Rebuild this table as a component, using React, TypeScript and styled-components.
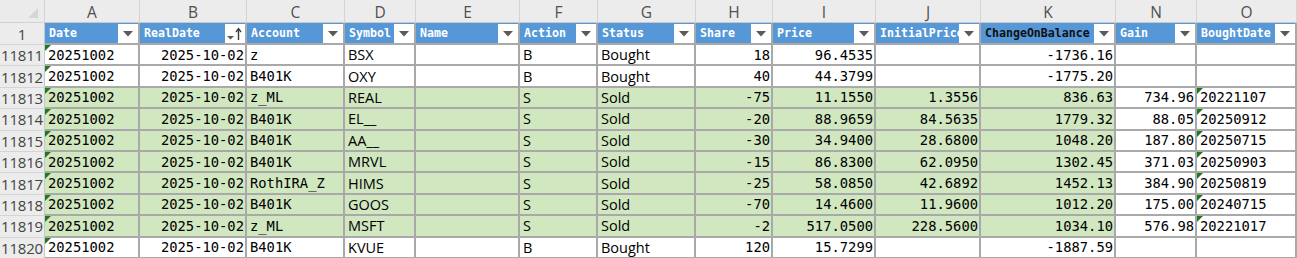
import React from "react";
import styled, { createGlobalStyle, css } from "styled-components";

const GlobalStyle = createGlobalStyle`
  html, body { margin: 0; padding: 0; background: #ffffff; overflow: hidden; }
  * { box-sizing: border-box; }
`;

const COLS = [45, 95, 107, 98, 71, 104, 78, 98, 77, 103, 105, 135, 81, 100];

const Sheet = styled.div`
  display: grid;
  grid-template-columns: ${COLS.map((c) => `${c}px`).join(" ")};
  grid-template-rows: 23px 22px repeat(10, 21.4px);
  width: 1297px;
`;

const Corner = styled.div`
  position: relative;
  background: #ebebeb;
  border-right: 1px solid #d2d2d2;
  border-bottom: 1px solid #d2d2d2;
`;

const CornerMark = styled.svg`
  position: absolute;
  right: 6px;
  bottom: 4px;
`;

const ColLetter = styled.div`
  background: #ececec;
  border-right: 1px solid #d4d4d4;
  border-bottom: 1px solid #c8c8c8;
  display: flex;
  align-items: center;
  justify-content: center;
  font-family: "Open Sans", "Noto Sans", sans-serif;
  font-size: 15.5px;
  color: #505050;
  padding-top: 1px;
`;

const RowNum = styled.div`
  background: #ececec;
  border-right: 1px solid #c8c8c8;
  border-bottom: 1px solid #d4d4d4;
  display: flex;
  align-items: center;
  justify-content: center;
  font-family: "Open Sans", "Noto Sans", sans-serif;
  font-size: 15px;
  letter-spacing: -0.2px;
  color: #444444;
  overflow: hidden;
`;

const HeaderCell = styled.div<{ $dark?: boolean }>`
  position: relative;
  background: #5697d8;
  border-right: 2px solid #a9a9a9;
  border-bottom: 2px solid #a9a9a9;
  display: flex;
  align-items: center;
  padding: 0 3px 0 4px;
  overflow: hidden;
  white-space: nowrap;
  font-family: "DejaVu Sans Mono", "Liberation Mono", monospace;
  font-weight: bold;
  font-size: 11.6px;
  color: ${(p) => (p.$dark ? "#101010" : "#ffffff")};
`;

const FilterButton = styled.div`
  position: absolute;
  right: 0;
  top: 1px;
  bottom: 0;
  width: 20px;
  background: #ffffff;
  display: flex;
  align-items: center;
  justify-content: center;
`;

const DataCell = styled.div<{
  $align?: "left" | "right";
  $green?: boolean;
  $sans?: boolean;
}>`
  position: relative;
  background: ${(p) => (p.$green ? "#d1e7c0" : "#ffffff")};
  border-right: 2px solid #a9a9a9;
  border-bottom: 2px solid #a9a9a9;
  display: flex;
  align-items: center;
  justify-content: ${(p) => (p.$align === "right" ? "flex-end" : "flex-start")};
  padding: 0 1px 0 3px;
  overflow: hidden;
  white-space: nowrap;
  color: #000000;
  ${(p) =>
    p.$sans
      ? css`
          font-family: "Open Sans", "Noto Sans", sans-serif;
          font-size: 14.5px;
        `
      : css`
          font-family: "DejaVu Sans Mono", "Liberation Mono", monospace;
          font-size: 13.8px;
        `}
`;

const Flag = styled.span`
  position: absolute;
  left: 0;
  top: 0;
  width: 0;
  height: 0;
  border-top: 6px solid #1f7a1f;
  border-right: 6px solid transparent;
`;

const DownTriangle = () => (
  <svg width="10" height="6" viewBox="0 0 10 6">
    <path d="M0 0 H10 L5 5.5 Z" fill="#5a5a5a" />
  </svg>
);

const SortIcon = () => (
  <svg width="18" height="16" viewBox="0 0 18 16">
    <path d="M1 10 H8 L4.5 13.5 Z" fill="#5a5a5a" />
    <path d="M12.5 14 V3" stroke="#3a3a3a" strokeWidth="1.4" />
    <path d="M10 6 L12.5 2.5 L15 6" stroke="#3a3a3a" strokeWidth="1.3" fill="none" />
  </svg>
);

type ColDef = {
  letter: string;
  title: string;
  align: "left" | "right";
  sans?: boolean;
  greenable: boolean;
  dark?: boolean;
  sort?: boolean;
  flag?: boolean;
};

const columns: ColDef[] = [
  { letter: "A", title: "Date", align: "left", greenable: true, flag: true },
  { letter: "B", title: "RealDate", align: "right", greenable: true, sort: true },
  { letter: "C", title: "Account", align: "left", greenable: true },
  { letter: "D", title: "Symbol", align: "left", sans: true, greenable: true },
  { letter: "E", title: "Name", align: "left", greenable: true },
  { letter: "F", title: "Action", align: "left", sans: true, greenable: true },
  { letter: "G", title: "Status", align: "left", sans: true, greenable: true },
  { letter: "H", title: "Share", align: "right", greenable: true },
  { letter: "I", title: "Price", align: "right", greenable: true },
  { letter: "J", title: "InitialPrice", align: "right", greenable: true },
  { letter: "K", title: "ChangeOnBalance", align: "right", greenable: true, dark: true },
  { letter: "N", title: "Gain", align: "right", greenable: false },
  { letter: "O", title: "BoughtDate", align: "left", greenable: false, flag: true },
];

type Row = { n: number; green: boolean; cells: string[] };

const rows: Row[] = [
  { n: 11811, green: false, cells: ["20251002", "2025-10-02", "z", "BSX", "", "B", "Bought", "18", "96.4535", "", "-1736.16", "", ""] },
  { n: 11812, green: false, cells: ["20251002", "2025-10-02", "B401K", "OXY", "", "B", "Bought", "40", "44.3799", "", "-1775.20", "", ""] },
  { n: 11813, green: true, cells: ["20251002", "2025-10-02", "z_ML", "REAL", "", "S", "Sold", "-75", "11.1550", "1.3556", "836.63", "734.96", "20221107"] },
  { n: 11814, green: true, cells: ["20251002", "2025-10-02", "B401K", "EL__", "", "S", "Sold", "-20", "88.9659", "84.5635", "1779.32", "88.05", "20250912"] },
  { n: 11815, green: true, cells: ["20251002", "2025-10-02", "B401K", "AA__", "", "S", "Sold", "-30", "34.9400", "28.6800", "1048.20", "187.80", "20250715"] },
  { n: 11816, green: true, cells: ["20251002", "2025-10-02", "B401K", "MRVL", "", "S", "Sold", "-15", "86.8300", "62.0950", "1302.45", "371.03", "20250903"] },
  { n: 11817, green: true, cells: ["20251002", "2025-10-02", "RothIRA_Z", "HIMS", "", "S", "Sold", "-25", "58.0850", "42.6892", "1452.13", "384.90", "20250819"] },
  { n: 11818, green: true, cells: ["20251002", "2025-10-02", "B401K", "GOOS", "", "S", "Sold", "-70", "14.4600", "11.9600", "1012.20", "175.00", "20240715"] },
  { n: 11819, green: true, cells: ["20251002", "2025-10-02", "z_ML", "MSFT", "", "S", "Sold", "-2", "517.0500", "228.5600", "1034.10", "576.98", "20221017"] },
  { n: 11820, green: false, cells: ["20251002", "2025-10-02", "B401K", "KVUE", "", "B", "Bought", "120", "15.7299", "", "-1887.59", "", ""] },
];

export default function App() {
  return (
    <>
      <GlobalStyle />
      <Sheet>
        <Corner>
          <CornerMark width="10" height="10" viewBox="0 0 10 10">
            <path d="M10 0 V10 H0 Z" fill="#d6d6d6" />
          </CornerMark>
        </Corner>
        {columns.map((c) => (
          <ColLetter key={c.letter}>{c.letter}</ColLetter>
        ))}

        <RowNum>1</RowNum>
        {columns.map((c) => (
          <HeaderCell key={c.title} $dark={c.dark}>
            {c.title}
            <FilterButton>{c.sort ? <SortIcon /> : <DownTriangle />}</FilterButton>
          </HeaderCell>
        ))}

        {rows.map((r) => (
          <React.Fragment key={r.n}>
            <RowNum>{r.n}</RowNum>
            {columns.map((c, i) => (
              <DataCell
                key={c.letter}
                $align={c.align}
                $sans={c.sans}
                $green={r.green && c.greenable}
              >
                {c.flag && r.cells[i] !== "" && <Flag />}
                {r.cells[i]}
              </DataCell>
            ))}
          </React.Fragment>
        ))}
      </Sheet>
    </>
  );
}
